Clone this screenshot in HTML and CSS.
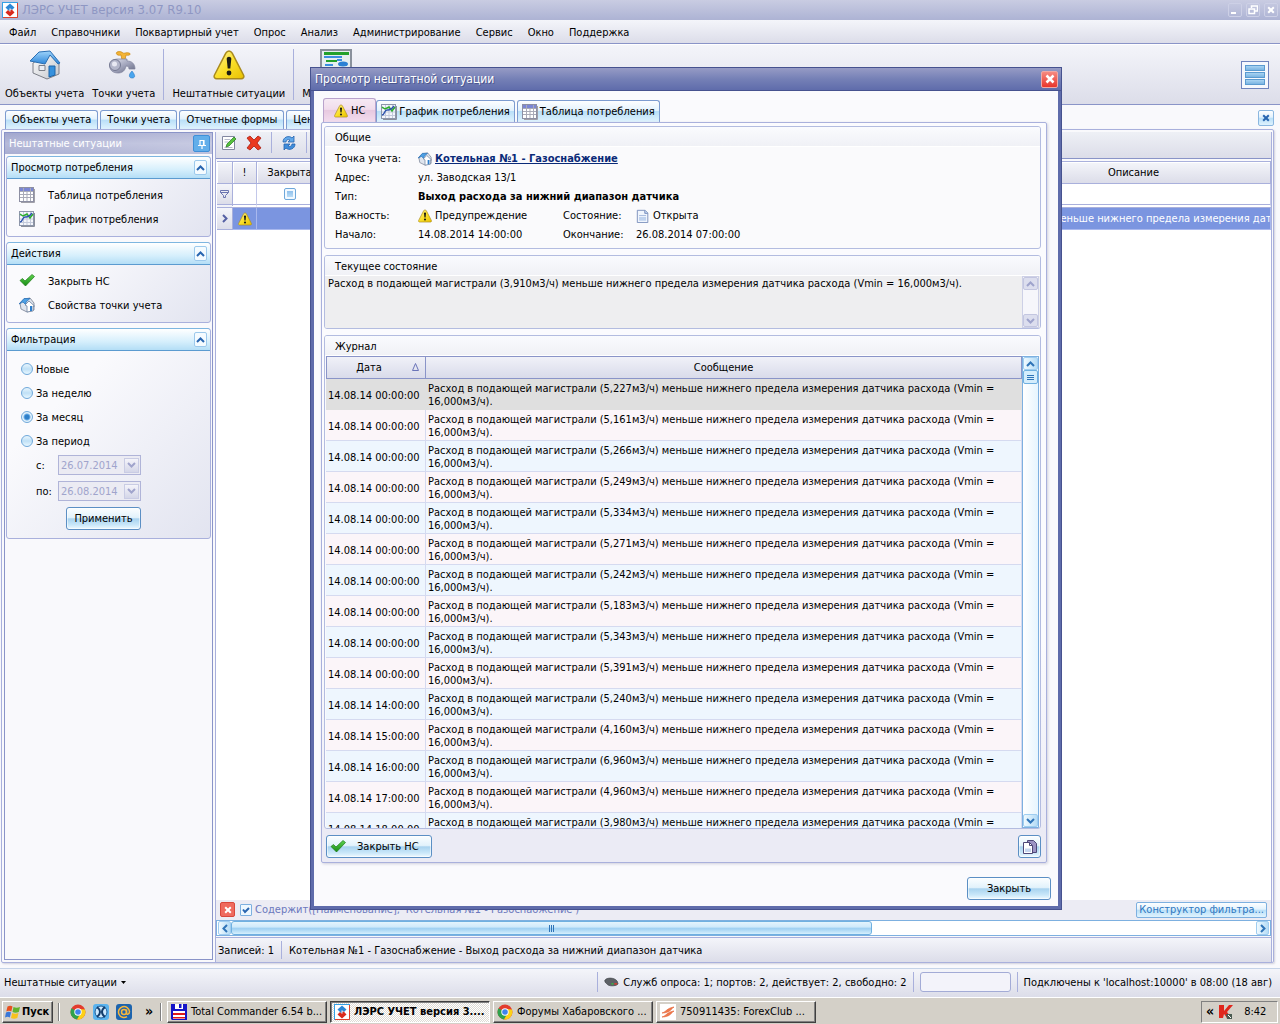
FILE: index.html
```html
<!DOCTYPE html>
<html lang="ru">
<head>
<meta charset="utf-8">
<title>ЛЭРС УЧЕТ версия 3.07 R9.10</title>
<link rel="stylesheet" href="styles.css">
</head>
<body>
<svg class="sprite" width="0" height="0" aria-hidden="true">
  <defs>
    <linearGradient id="g-yellow" x1="0" y1="0" x2="1" y2="1"><stop offset="0" stop-color="#fff3a0"/><stop offset=".5" stop-color="#fbe02a"/><stop offset="1" stop-color="#e8c000"/></linearGradient>
    <linearGradient id="g-roof" x1="0" y1="0" x2="0" y2="1"><stop offset="0" stop-color="#9fd4fb"/><stop offset="1" stop-color="#2d86d9"/></linearGradient>
    <linearGradient id="g-wall" x1="0" y1="0" x2="1" y2="1"><stop offset="0" stop-color="#ffffff"/><stop offset="1" stop-color="#c4c6cc"/></linearGradient>
    <linearGradient id="g-metal" x1="0" y1="0" x2="1" y2="1"><stop offset="0" stop-color="#e6e7f2"/><stop offset=".5" stop-color="#a3a6bd"/><stop offset="1" stop-color="#62667f"/></linearGradient>
    <linearGradient id="g-green" x1="0" y1="0" x2="0" y2="1"><stop offset="0" stop-color="#5fd44f"/><stop offset="1" stop-color="#178a14"/></linearGradient>
  </defs>
  <symbol id="i-logo" viewBox="0 0 16 16"><rect x=".5" y=".5" width="15" height="15" fill="#fff" stroke="#35a0e6"/><path d="M15.500 1v14.500H1" fill="none" stroke="#e0402a"/><path d="m8 1.500 4.500 4L10 8 8 6.200 7 7.200l2 1.300H6.500L3.500 5.500z" fill="#2c87d6"/><path d="m8 14.500-4.500-4L6 8l2 1.800 1-1L7.500 7.800H10l2.500 2.700z" fill="#d9291c"/></symbol>
  <symbol id="i-warn" viewBox="0 0 32 32"><path d="M16 2c1.500 0 2.500 1 3.200 2.200L30.500 26c1 2-.2 3.800-2.300 3.800H3.800c-2.100 0-3.300-1.800-2.300-3.800L12.800 4.200C13.500 3 14.500 2 16 2z" fill="url(#g-yellow)" stroke="#a98a1c" stroke-width="1.500"/><path d="M13.700 10c0-3 4.600-3 4.600 0l-1 9.500h-2.600z" fill="#1c1c14"/><circle cx="16" cy="24" r="2.400" fill="#1c1c14"/></symbol>
  <symbol id="i-house" viewBox="0 0 32 32"><path d="M4 14v10l14 6 12-5V15L20 4z" fill="url(#g-wall)" stroke="#7c7f88"/><path d="m1 12 9-9 11-1 10 12-2 1-8-9-5 9z" fill="url(#g-roof)" stroke="#2a6fb4"/><path d="M20 17h6v9l-6 2z" fill="#3791dd" stroke="#1f64a8"/><path d="M10 16.500h6v5h-6z" fill="#e8edf5" stroke="#7c7f88"/></symbol>
  <symbol id="i-homes" viewBox="0 0 16 16"><path d="M1 6 5 2l6-1 4 5v7l-7 2-6-3z" fill="#dfe5ee" stroke="#8d95a5"/><path d="M0 7 5 1.500h6L7 5v3L4 5z" fill="#4da0e4" stroke="#2a6fb4" stroke-width=".7"/><path d="m6 8 4-4 5.500 5H14v5l-6 1V9z" fill="#fff" stroke="#6b7f9c" stroke-width=".8"/><path d="M11 9h2v5h-2z" fill="#2d7fce"/></symbol>
  <symbol id="i-tap" viewBox="0 0 32 32"><path d="M9 3c3-1 5 0 6 1s3-1 6 0 0 3-3 2l-1 5h-3l-1-5c-3 1-6-1-4-3z" fill="#f4b436" stroke="#c98510" stroke-width=".7"/><path d="M10 10h9v2c5 0 8 3 8 8h-6c0-2-1-3-3-3-1 5-4 7-8 7-6 0-9-4-8-8 1-4 4-6 8-6z" fill="url(#g-metal)" stroke="#7d8099" stroke-width=".7"/><circle cx="7" cy="16" r="5.500" fill="#b4b7cb" stroke="#757992"/><circle cx="6.500" cy="15" r="2.500" fill="#e8e9f3"/><path d="M24 22c4 5 3 7 0 7s-4-3 0-7z" fill="#49a5ee" stroke="#2a78c4" stroke-width=".6"/></symbol>
  <symbol id="i-scheme" viewBox="0 0 32 32"><path d="M1 1h30v30H1z" fill="#e6eef0" stroke="#8a919c" stroke-width="2"/><path d="M4 3h25v3H4z" fill="#23a12c"/><path d="M4 8h9M13 8h9M17 11h5" stroke="#3b8ee0" stroke-width="2"/><path d="M6 12h11" stroke="#23a12c" stroke-width="2"/><path d="M5 16h8" stroke="#3b8ee0" stroke-width="2"/><ellipse cx="23" cy="15" rx="5" ry="2.500" fill="#2b80d4"/></symbol>
  <symbol id="i-table" viewBox="0 0 16 16"><path d="M2 15.500h13.500V2" fill="none" stroke="#a0a0a8"/><rect x=".5" y=".5" width="14" height="14" fill="#fff" stroke="#8d8fa3"/><path d="M1 1h13v3H1z" fill="#7a86d4"/><path d="M1 4.500h13M1 7.500h13M1 10.500h13M4.500 1v13M8 4v10M11.500 1v13" stroke="#a9abb8" fill="none"/></symbol>
  <symbol id="i-chart" viewBox="0 0 16 16"><path d="M2 15.500h13.500V2" fill="none" stroke="#8a8f9c"/><rect x=".5" y=".5" width="14" height="14" fill="#f4f6fb" stroke="#8d96aa"/><path d="M1 4.500h13M1 8h13M1 11.500h13M4.500 1v13M8 1v13M11.500 1v13" stroke="#c3cadb" fill="none"/><path d="m1 3 3 2 4-2 3 4 3-4" stroke="#2bb02b" stroke-width="1.500" fill="none"/><path d="M1 11c3 0 2-5 5-5 2 0 3 1 7-4" stroke="#2f55ad" stroke-width="1.500" fill="none"/></symbol>
  <symbol id="i-check" viewBox="0 0 16 16"><path d="M1 7.500 3.500 5.500 6 8 13 1.500 15.500 3.500 6.500 13z" fill="url(#g-green)" stroke="#1c7a18" stroke-width=".7"/></symbol>
  <symbol id="i-doc" viewBox="0 0 16 16"><path d="M1.500 1.500h9l3 3v11h-12z" fill="#f0f5fd" stroke="#7489b8"/><path d="M10 1.500v3.500h3.500" fill="#bcd0f0" stroke="#7489b8"/><path d="M3.500 9h8v4.500h-8z" fill="#bfd2ee"/><path d="M3.500 7.500h8" stroke="#9db2d8"/></symbol>
  <symbol id="i-edit" viewBox="0 0 16 16"><path d="M1.500 1.500h12v13h-12z" fill="#fff" stroke="#8287a0"/><path d="M3.500 4.500h6M3.500 7h4M3.500 12.500h8" stroke="#b6bacb"/><path d="m5 12 1-3 7-7 2 2-7 7z" fill="#57c13e" stroke="#24791b" stroke-width=".7"/></symbol>
  <symbol id="i-delete" viewBox="0 0 16 16"><path d="m1 3 3-2 4 4 4-4 3 2-4 5 4 5-3 2-4-4-4 4-3-2 4-5z" fill="#ea3a20" stroke="#a81d10" stroke-width=".8"/></symbol>
  <symbol id="i-refresh" viewBox="0 0 16 16"><path d="M2 7c0-5 6-7 9-4l2-2v6H7l2-2C7 4 5 5 5 7z" fill="#62a9ea" stroke="#2362ae" stroke-width=".8"/><path d="M14 9c0 5-6 7-9 4l-2 2V9h6l-2 2c2 1 4 0 4-2z" fill="#3f8ddb" stroke="#2362ae" stroke-width=".8"/></symbol>
  <symbol id="i-copy" viewBox="0 0 16 16"><path d="M5.500 1.500h6l3 3v9h-9z" fill="#9d94c4" stroke="#4e4878"/><path d="M1.500 3.500h6l3 3v8h-9z" fill="#fff" stroke="#4e4878"/><path d="M7.500 3.500v3h3" fill="none" stroke="#4e4878"/><path d="M3 9.500h6v3.500H3z" fill="#c6d6ef"/></symbol>
  <symbol id="i-up" viewBox="0 0 9 6"><path d="M1 5 4.500 1.500 8 5" fill="none" stroke="currentColor" stroke-width="2"/></symbol>
  <symbol id="i-down" viewBox="0 0 9 6"><path d="M1 1 4.500 4.500 8 1" fill="none" stroke="currentColor" stroke-width="2"/></symbol>
  <symbol id="i-left" viewBox="0 0 6 9"><path d="M5 1 1.500 4.500 5 8" fill="none" stroke="currentColor" stroke-width="2"/></symbol>
  <symbol id="i-right" viewBox="0 0 6 9"><path d="M1 1 4.500 4.500 1 8" fill="none" stroke="currentColor" stroke-width="2"/></symbol>
  <symbol id="i-x" viewBox="0 0 10 10"><path d="m1.500 1.500 7 7m0-7-7 7" fill="none" stroke="currentColor" stroke-width="2.500"/></symbol>
  <symbol id="i-pin" viewBox="0 0 10 10"><path d="M3 6V1.500h4V6M1 6.500h8M5 7v3M6.500 1v5" fill="none" stroke="#fff" stroke-width="1.200"/></symbol>
  <symbol id="i-chrome" viewBox="0 0 16 16"><circle cx="8" cy="8" r="7.500" fill="#e33b2e"/><path d="M1.500 4.200A7.500 7.500 0 0 0 7 15.400L10.500 10 8 8z" fill="#2fa24c"/><path d="M15 5.500A7.500 7.500 0 0 1 7 15.400L10.800 9 8 5z" fill="#fcd116"/><circle cx="8" cy="8" r="3.700" fill="#fff"/><circle cx="8" cy="8" r="2.800" fill="#3f83ec"/></symbol>
  <symbol id="i-xapp" viewBox="0 0 16 16"><rect width="16" height="16" rx="3" fill="#5ab3ee"/><circle cx="8" cy="8" r="6" fill="#cdeaff" stroke="#1b5c97"/><path d="M4 3c4 3 4 7 0 10M12 3c-4 3-4 7 0 10" fill="none" stroke="#123c6b" stroke-width="2"/></symbol>
  <symbol id="i-mail" viewBox="0 0 16 16"><rect width="16" height="16" rx="3" fill="#1d64ae"/><circle cx="8" cy="8" r="2.500" fill="none" stroke="#f8b73c" stroke-width="1.500"/><path d="M10.500 5.500V9c0 2 3 1.500 3-1.500A5.500 5.500 0 1 0 11 12.700" fill="none" stroke="#f8b73c" stroke-width="1.500"/></symbol>
  <symbol id="i-floppy" viewBox="0 0 16 16"><path d="M0 0h16v16H1l-1-1z" fill="#1414c8"/><path d="M4 0h8v5H4z" fill="#fff"/><path d="M8 0h2.500v4H8z" fill="#1414c8"/><path d="M2 7h12v8H2z" fill="#fff"/><path d="M2 9h12v2H2zM2 13h12v1.500H2z" fill="#e01818"/></symbol>
  <symbol id="i-forex" viewBox="0 0 16 16"><path d="M0 0h16v16H0z" fill="#fff"/><path d="M2 9c4-1 5-5 12-6-3 2-4 6-12 6zM2 13c4-1 5-5 12-6-3 2-4 6-12 6z" fill="#ef7a4d" stroke="#e25a2b" stroke-width=".6"/></symbol>
  <symbol id="i-windows" viewBox="0 0 16 16"><path d="M2.500 2.500c2-1 3.500-1 5 0L6.300 7.500c-1.500-1-3-1-5 0z" fill="#e8501f"/><path d="M8.500 3c2 1 4 1 6.500 0l-1.200 5c-2 1-4.500 1-6.300 0z" fill="#62b32a"/><path d="M1 8.500c2-1 3.800-1 5 0L4.800 13.500c-1.300-1-3-1-4.800 0z" fill="#3a78d8"/><path d="M7.200 9c2 1 4 1 6.300 0l-1.200 5c-2 1-4.500 1-6.300 0z" fill="#f7c21c"/></symbol>
  <symbol id="i-kasper" viewBox="0 0 16 16"><path d="M1 1h5v6l5-6h4L9 8l3 4-3 2-3-4-1 4H1z" fill="#e0261c"/><path d="M8 10h6v5H9z" fill="#4a5a50"/><path d="m10 11 3 3" stroke="#fff"/></symbol>
  <symbol id="i-service" viewBox="0 0 16 10"><path d="M1 3c2-3 10-3 13 1l1 3c-1 2-8 3-11 1L1 5z" fill="#5d6166" stroke="#3d4044" stroke-width=".7"/><path d="M8 7h2" stroke="#35c43b" stroke-width="1.500"/><path d="M11 7h3" stroke="#e03c2a" stroke-width="1.500"/></symbol>
</svg>

<header class="titlebar">
  <svg class="ic16"><use href="#i-logo"/></svg>
  <h1 class="titlebar-text">ЛЭРС УЧЕТ версия 3.07 R9.10</h1>
  <button class="winbtn" aria-label="Свернуть"><svg width="10" height="10"><path d="M1 8h5" stroke="#fff" stroke-width="2"/></svg></button>
  <button class="winbtn" aria-label="Восстановить"><svg width="10" height="10"><path d="M3.500 3V1h6v5H7M1 4h5.500v4.500H1z" fill="none" stroke="#fff" stroke-width="1.500"/></svg></button>
  <button class="winbtn" aria-label="Закрыть окно"><svg class="x8"><use href="#i-x"/></svg></button>
</header>

<nav class="menubar">
  <a href="#">Файл</a><a href="#">Справочники</a><a href="#">Поквартирный учет</a><a href="#">Опрос</a><a href="#">Анализ</a><a href="#">Администрирование</a><a href="#">Сервис</a><a href="#">Окно</a><a href="#">Поддержка</a>
</nav>

<div class="toolbar">
  <button class="tool"><svg class="ic32"><use href="#i-house"/></svg>Объекты учета</button>
  <button class="tool"><svg class="ic32"><use href="#i-tap"/></svg>Точки учета</button>
  <span class="sep"></span>
  <button class="tool"><svg class="ic32"><use href="#i-warn"/></svg>Нештатные ситуации</button>
  <span class="sep"></span>
  <button class="tool"><svg class="ic32"><use href="#i-scheme"/></svg>Мнемосхемы</button>
  <button class="listbtn" aria-label="Вид"><i></i><i></i><i></i></button>
</div>

<div class="doctabs" role="tablist">
  <button class="doctab" role="tab">Объекты учета</button>
  <button class="doctab" role="tab">Точки учета</button>
  <button class="doctab" role="tab">Отчетные формы</button>
  <button class="doctab" role="tab">Центр</button>
  <button class="closetab" aria-label="Закрыть вкладку"><svg class="x8"><use href="#i-x"/></svg></button>
</div>

<main class="workspace">
  <aside class="sidebar">
    <div class="side-title"><span>Нештатные ситуации</span><button class="pin" aria-label="Закрепить"><svg class="ic10"><use href="#i-pin"/></svg></button></div>
    <section class="group">
      <h2 class="group-head">Просмотр потребления<button class="fold" aria-label="Свернуть группу"><svg class="chev"><use href="#i-up"/></svg></button></h2>
      <div class="group-links">
        <a href="#"><svg class="ic16"><use href="#i-table"/></svg>Таблица потребления</a>
        <a href="#"><svg class="ic16"><use href="#i-chart"/></svg>График потребления</a>
      </div>
    </section>
    <section class="group">
      <h2 class="group-head">Действия<button class="fold" aria-label="Свернуть группу"><svg class="chev"><use href="#i-up"/></svg></button></h2>
      <div class="group-links">
        <a href="#"><svg class="ic16"><use href="#i-check"/></svg>Закрыть НС</a>
        <a href="#"><svg class="ic16"><use href="#i-homes"/></svg>Свойства точки учета</a>
      </div>
    </section>
    <section class="group">
      <h2 class="group-head">Фильтрация<button class="fold" aria-label="Свернуть группу"><svg class="chev"><use href="#i-up"/></svg></button></h2>
      <form class="filter">
        <label class="radio"><input type="radio" name="period">Новые</label>
        <label class="radio"><input type="radio" name="period">За неделю</label>
        <label class="radio"><input type="radio" name="period" checked>За месяц</label>
        <label class="radio"><input type="radio" name="period">За период</label>
        <div class="daterow"><label for="from">с:</label><span class="combo"><select id="from" disabled><option>26.07.2014</option></select><span class="combo-btn"><svg class="chev"><use href="#i-down"/></svg></span></span></div>
        <div class="daterow"><label for="to">по:</label><span class="combo"><select id="to" disabled><option>26.08.2014</option></select><span class="combo-btn"><svg class="chev"><use href="#i-down"/></svg></span></span></div>
        <button type="button" class="btn apply">Применить</button>
      </form>
    </section>
  </aside>

  <section class="content">
    <div class="content-tools">
      <button class="flat" aria-label="Изменить"><svg class="ic16"><use href="#i-edit"/></svg></button>
      <button class="flat" aria-label="Удалить"><svg class="ic16"><use href="#i-delete"/></svg></button>
      <span class="sep"></span>
      <button class="flat" aria-label="Обновить"><svg class="ic16"><use href="#i-refresh"/></svg></button>
      <span class="sep"></span>
    </div>
    <div class="grid-wrap">
      <table class="grid">
        <colgroup><col class="c-ind"><col class="c-mark"><col class="c-closed"><col><col class="c-desc"></colgroup>
        <thead><tr><th></th><th>!</th><th>Закрыта</th><th></th><th>Описание</th></tr></thead>
        <tbody>
          <tr class="filter-row"><td class="ind"><svg width="9" height="10"><path d="M.500 1.500h8v2l-3 3v2h-2v-2l-3-3zM.500 3.500h8" fill="none" stroke="#6a74b0"/></svg></td><td></td><td><input type="checkbox" class="tri" aria-label="Закрыта"></td><td></td><td></td></tr>
          <tr class="sel-row"><td class="ind"><svg class="chev-r"><use href="#i-right"/></svg></td><td><svg class="ic14"><use href="#i-warn"/></svg></td><td></td><td></td><td class="desc">меньше нижнего предела измерения датчика</td></tr>
        </tbody>
      </table>
    </div>
    <div class="filter-panel">
      <button class="redx" aria-label="Очистить фильтр"><svg class="x8"><use href="#i-x"/></svg></button>
      <label class="filter-text"><input type="checkbox" class="chk" checked>Содержит([Наименование], 'Котельная №1 - Газоснабжение')</label>
      <button class="builder">Конструктор фильтра...</button>
    </div>
    <div class="hscroll">
      <span class="sbtn"><svg class="chev-r"><use href="#i-left"/></svg></span><span class="hthumb"><i></i><i></i><i></i></span><span class="hrest"></span><span class="sbtn"><svg class="chev-r"><use href="#i-right"/></svg></span>
    </div>
    <div class="content-foot"><span>Записей: 1</span><span class="sep"></span><span>Котельная №1 - Газоснабжение - Выход расхода за нижний диапазон датчика</span></div>
  </section>
</main>

<footer class="status">
  <a href="#" class="status-view">Нештатные ситуации <svg width="5" height="3"><path d="M0 0h5L2.500 3z" fill="#000"/></svg></a>
  <span class="sep"></span>
  <span class="status-srv"><svg class="srv"><use href="#i-service"/></svg>Служб опроса: 1; портов: 2, действует: 2, свободно: 2</span>
  <span class="sep"></span>
  <span class="progress"></span>
  <span class="sep"></span>
  <span class="status-conn">Подключены к 'localhost:10000' в 08:00 (18 авг)</span>
</footer>

<div class="taskbar">
  <button class="start"><svg class="ic16"><use href="#i-windows"/></svg>Пуск</button>
  <span class="tsep"></span>
  <div class="quick">
    <button class="flat" aria-label="Chrome"><svg class="ic16"><use href="#i-chrome"/></svg></button>
    <button class="flat" aria-label="XApp"><svg class="ic16"><use href="#i-xapp"/></svg></button>
    <button class="flat" aria-label="Почта"><svg class="ic16"><use href="#i-mail"/></svg></button>
    <span class="more">»</span>
  </div>
  <span class="tsep"></span>
  <div class="tasks">
    <button class="task"><svg class="ic16"><use href="#i-floppy"/></svg>Total Commander 6.54 b...</button>
    <button class="task task-on"><svg class="ic16"><use href="#i-logo"/></svg>ЛЭРС УЧЕТ версия 3....</button>
    <button class="task"><svg class="ic16"><use href="#i-chrome"/></svg>Форумы Хабаровского ...</button>
    <button class="task"><svg class="ic16"><use href="#i-forex"/></svg>750911435: ForexClub ...</button>
  </div>
  <div class="tray"><span class="more">«</span><svg class="ic16"><use href="#i-kasper"/></svg><time>8:42</time></div>
</div>

<div class="dialog" role="dialog" aria-labelledby="dlg-title">
  <div class="dlg-title"><h2 id="dlg-title">Просмотр нештатной ситуации</h2><button class="dlg-x" aria-label="Закрыть диалог"><svg class="ic10"><use href="#i-x"/></svg></button></div>
  <div class="dlg-body">
    <div class="dlg-tabs" role="tablist">
      <button class="dlg-tab dlg-tab-on" role="tab"><svg class="ic14"><use href="#i-warn"/></svg>НС</button>
      <button class="dlg-tab" role="tab"><svg class="ic16"><use href="#i-chart"/></svg>График потребления</button>
      <button class="dlg-tab" role="tab"><svg class="ic16"><use href="#i-table"/></svg>Таблица потребления</button>
    </div>
    <div class="panel">
      <section class="box">
        <h3 class="box-head">Общие</h3>
        <dl class="facts">
          <dt>Точка учета:</dt><dd class="wide"><svg class="ic14"><use href="#i-homes"/></svg><a href="#" class="point">Котельная №1 - Газоснабжение</a></dd>
          <dt>Адрес:</dt><dd class="wide">ул. Заводская 13/1</dd>
          <dt>Тип:</dt><dd class="wide"><strong>Выход расхода за нижний диапазон датчика</strong></dd>
          <dt>Важность:</dt><dd><svg class="ic14"><use href="#i-warn"/></svg>Предупреждение</dd><dt>Состояние:</dt><dd><svg class="ic14"><use href="#i-doc"/></svg>Открыта</dd>
          <dt>Начало:</dt><dd>14.08.2014 14:00:00</dd><dt>Окончание:</dt><dd>26.08.2014 07:00:00</dd>
        </dl>
      </section>
      <section class="box">
        <h3 class="box-head" id="state">Текущее состояние</h3>
        <div class="state">
          <textarea readonly aria-labelledby="state">Расход в подающей магистрали (3,910м3/ч) меньше нижнего предела измерения датчика расхода (Vmin = 16,000м3/ч).</textarea>
          <div class="vscroll vscroll-off"><span class="sbtn"><svg class="chev"><use href="#i-up"/></svg></span><span class="vrest"></span><span class="sbtn"><svg class="chev"><use href="#i-down"/></svg></span></div>
        </div>
      </section>
      <section class="box journal">
        <h3 class="box-head">Журнал</h3>
        <div class="log-wrap">
          <div class="log-clip">
          <table class="log">
            <colgroup><col class="c-date"><col></colgroup>
            <thead><tr><th>Дата<svg class="sort" width="7" height="8"><path d="M.5 7.500 3.500.500l3 7z" fill="none" stroke="#6a74b8"/></svg></th><th>Сообщение</th></tr></thead>
            <tbody>
              <tr class="cur"><td>14.08.14 00:00:00</td><td>Расход в подающей магистрали (5,227м3/ч) меньше нижнего предела измерения датчика расхода (Vmin = 16,000м3/ч).</td></tr>
              <tr><td>14.08.14 00:00:00</td><td>Расход в подающей магистрали (5,161м3/ч) меньше нижнего предела измерения датчика расхода (Vmin = 16,000м3/ч).</td></tr>
              <tr><td>14.08.14 00:00:00</td><td>Расход в подающей магистрали (5,266м3/ч) меньше нижнего предела измерения датчика расхода (Vmin = 16,000м3/ч).</td></tr>
              <tr><td>14.08.14 00:00:00</td><td>Расход в подающей магистрали (5,249м3/ч) меньше нижнего предела измерения датчика расхода (Vmin = 16,000м3/ч).</td></tr>
              <tr><td>14.08.14 00:00:00</td><td>Расход в подающей магистрали (5,334м3/ч) меньше нижнего предела измерения датчика расхода (Vmin = 16,000м3/ч).</td></tr>
              <tr><td>14.08.14 00:00:00</td><td>Расход в подающей магистрали (5,271м3/ч) меньше нижнего предела измерения датчика расхода (Vmin = 16,000м3/ч).</td></tr>
              <tr><td>14.08.14 00:00:00</td><td>Расход в подающей магистрали (5,242м3/ч) меньше нижнего предела измерения датчика расхода (Vmin = 16,000м3/ч).</td></tr>
              <tr><td>14.08.14 00:00:00</td><td>Расход в подающей магистрали (5,183м3/ч) меньше нижнего предела измерения датчика расхода (Vmin = 16,000м3/ч).</td></tr>
              <tr><td>14.08.14 00:00:00</td><td>Расход в подающей магистрали (5,343м3/ч) меньше нижнего предела измерения датчика расхода (Vmin = 16,000м3/ч).</td></tr>
              <tr><td>14.08.14 00:00:00</td><td>Расход в подающей магистрали (5,391м3/ч) меньше нижнего предела измерения датчика расхода (Vmin = 16,000м3/ч).</td></tr>
              <tr><td>14.08.14 14:00:00</td><td>Расход в подающей магистрали (5,240м3/ч) меньше нижнего предела измерения датчика расхода (Vmin = 16,000м3/ч).</td></tr>
              <tr><td>14.08.14 15:00:00</td><td>Расход в подающей магистрали (4,160м3/ч) меньше нижнего предела измерения датчика расхода (Vmin = 16,000м3/ч).</td></tr>
              <tr><td>14.08.14 16:00:00</td><td>Расход в подающей магистрали (6,960м3/ч) меньше нижнего предела измерения датчика расхода (Vmin = 16,000м3/ч).</td></tr>
              <tr><td>14.08.14 17:00:00</td><td>Расход в подающей магистрали (4,960м3/ч) меньше нижнего предела измерения датчика расхода (Vmin = 16,000м3/ч).</td></tr>
              <tr><td>14.08.14 18:00:00</td><td>Расход в подающей магистрали (3,980м3/ч) меньше нижнего предела измерения датчика расхода (Vmin = 16,000м3/ч).</td></tr>
            </tbody>
          </table>
          </div>
          <div class="vscroll"><span class="sbtn"><svg class="chev"><use href="#i-up"/></svg></span><span class="vthumb"><i></i><i></i><i></i></span><span class="vrest"></span><span class="sbtn"><svg class="chev"><use href="#i-down"/></svg></span></div>
        </div>
      </section>
      <div class="panel-foot">
        <button class="btn btn-check"><svg class="ic16"><use href="#i-check"/></svg>Закрыть НС</button>
        <button class="btn btn-icon" aria-label="Копировать"><svg class="ic16"><use href="#i-copy"/></svg></button>
      </div>
    </div>
    <div class="dlg-foot"><button class="btn btn-close">Закрыть</button></div>
  </div>
</div>
</body>
</html>
```
FILE: styles.css
```css
:root {
  --line: #a9b0dc;
  --line-dark: #8a94c8;
  --blue: #5b9bd0;
  --chrome: linear-gradient(#f4f5fa, #dcdde9);
  --tab: linear-gradient(#fdfeff 0%, #e3f2fd 45%, #b9dff8 50%, #dff3fe 100%);
}
* { box-sizing: border-box; }
html, body { height: 100%; }
body {
  margin: 0;
  display: flex;
  flex-direction: column;
  position: relative;
  overflow: hidden;
  background: #f9f9fc;
  color: #000;
  font: 11px/13px "DejaVu Sans Condensed", Tahoma, "Liberation Sans", sans-serif;
}
button, select, textarea, input { font: inherit; color: inherit; margin: 0; padding: 0; }
button { background: none; border: 0; }
a { color: inherit; text-decoration: none; }
h1, h2, h3, dl, dd { margin: 0; font: inherit; }
svg { flex: none; display: block; }
.sprite { position: absolute; }
.ic10 { width: 10px; height: 10px; }
.ic14 { width: 14px; height: 14px; }
.ic16 { width: 16px; height: 16px; }
.ic32 { width: 32px; height: 32px; }
.x8 { width: 8px; height: 8px; }
.chev { width: 9px; height: 6px; }
.chev-r { width: 6px; height: 9px; }
.flat { display: flex; }
.sep { width: 1px; background: var(--line); align-self: stretch; flex: none; }

.titlebar {
  height: 20px;
  flex: none;
  display: flex;
  align-items: center;
  gap: 4px;
  padding: 0 2px;
  background: linear-gradient(#c9cce2, #adb3d4);
}
.titlebar-text { flex: 1; font-size: 13px; line-height: 16px; color: #8f97c3; }
.winbtn { width: 14px; height: 14px; display: grid; place-items: center; border: 1px solid #cdd0e6; border-radius: 2px; color: #fff; }

.menubar {
  height: 24px;
  flex: none;
  display: flex;
  align-items: center;
  gap: 15px;
  padding: 1px 9px 0;
  background: var(--chrome);
  border-bottom: 1px solid var(--line-dark);
}
.toolbar {
  height: 61px;
  flex: none;
  display: flex;
  align-items: stretch;
  gap: 8px;
  padding: 4px 11px 4px 5px;
  background: var(--chrome);
  border-top: 1px solid #fff;
  border-bottom: 1px solid var(--line-dark);
}
.tool { display: flex; flex-direction: column; align-items: center; justify-content: space-between; white-space: nowrap; }
.listbtn { margin: auto 0 auto auto; width: 28px; height: 28px; border: 1px solid #6f83bd; background: #f6f8fd; padding: 3px; display: flex; flex-direction: column; gap: 1px; }
.listbtn i { flex: 1; border: 1px solid #5b9bd0; background: linear-gradient(#a8d3f2, #7ab4e2); }

.doctabs { height: 24px; flex: none; display: flex; align-items: flex-end; gap: 2px; padding: 0 6px 0 5px; }
.doctab { height: 19px; padding: 0 6px 1px; border: 1px solid #7d9cd0; border-bottom: 0; border-radius: 3px 3px 0 0; background: var(--tab); white-space: nowrap; }
.closetab { width: 16px; height: 16px; margin: 0 0 3px auto; border: 1px solid #8bb7e0; border-radius: 2px; background: var(--tab); color: #2865b0; display: grid; place-items: center; }

.workspace {
  flex: 1;
  min-height: 0;
  display: flex;
  gap: 2px;
  margin: 0 6px 5px 1px;
  padding: 2px 1px 0 2px;
  border: 1px solid var(--line);
  border-radius: 2px;
  box-shadow: 1px 1px 2px #d0d0dc;
}
.sidebar { width: 209px; flex: none; margin-bottom: 2px; border: 1px solid var(--line-dark); display: flex; flex-direction: column; padding-bottom: 2px; }
.side-title { height: 21px; display: flex; align-items: center; justify-content: space-between; padding: 0 2px 0 4px; background: linear-gradient(90deg, rgba(255,255,255,0), rgba(255,255,255,.25)), linear-gradient(#a2a7ce, #b6bad9 50%, #a9aed2); color: #fff; }
.pin { width: 17px; height: 17px; border: 1px solid #3f8fd8; border-radius: 2px; background: #62aeea; display: grid; place-items: center; }
.group { margin: 2px 1px 3px; border: 1px solid var(--line); border-radius: 3px; background: linear-gradient(135deg, #fafafd 30%, #e2e4f0); }
.group-head { height: 22px; display: flex; align-items: center; justify-content: space-between; padding: 0 3px 0 4px; background: linear-gradient(#fff, #d6effc 60%, #b4def6); border-bottom: 1px solid var(--blue); box-shadow: 0 -1px 0 #7db6e0; border-radius: 3px 3px 0 0; }
.fold { width: 13px; height: 15px; border: 1px solid #9cc9ec; border-radius: 2px; background: #f4fbff; color: #2865b0; display: grid; place-items: center; }
.group-links { padding: 4px 12px 5px; }
.group-links a { height: 24px; display: flex; align-items: center; gap: 13px; }
.filter { padding: 6px 14px 8px; }
.radio { height: 24px; display: flex; align-items: center; gap: 3px; }
.radio input { appearance: none; width: 12px; height: 12px; border: 1px solid #6fa8da; border-radius: 50%; background: linear-gradient(#e8f5fd, #bfe0f6 50%, #e8f7ff); }
.radio input:checked { background: radial-gradient(#2e7fc9 0 2px, #6fb0e8 3px, #e3f2fc 4px); }
.daterow { height: 20px; margin: 2px 0 6px; padding-left: 15px; display: flex; align-items: center; }
.daterow label { width: 22px; }
.combo { width: 83px; height: 20px; display: flex; align-items: center; border: 1px solid #b0b4d8; background: #ebebf3; color: #a0a4cc; padding: 0 1px 0 2px; }
.combo select { flex: 1; min-width: 0; appearance: none; border: 0; background: none; opacity: 1; color: #a0a4cc; }
.combo-btn { width: 15px; height: 15px; border: 1px solid #c9cce4; background: linear-gradient(#f4f4fa, #d4d6e8); display: grid; place-items: center; }
.btn {
  height: 23px;
  border: 1px solid #5b8fc4;
  border-radius: 3px;
  background: linear-gradient(#fbfeff 0%, #e2f2fb 45%, #a9d3ef 52%, #c9e7f9 80%, #eefaff 100%);
  box-shadow: inset 0 0 0 1px rgba(255,255,255,.55);
  text-align: center;
}
.apply { display: block; width: 75px; margin: 0 0 0 45px; }

.content { flex: 1; min-width: 0; display: flex; flex-direction: column; border: 0 solid var(--line); border-width: 0 1px; }
.content-tools { height: 27px; flex: none; display: flex; align-items: center; gap: 9px; padding: 0 5px 5px; background: linear-gradient(#eef0f6, #dcdde9); border-bottom: 1px solid var(--line-dark); }
.grid-wrap { flex: 1; min-height: 0; margin-top: 2px; background: #fff; overflow: hidden; padding-left: 1px; }
.grid { width: 100%; table-layout: fixed; border-collapse: separate; border-spacing: 0; }
.c-ind { width: 16px; }
.c-mark { width: 24px; }
.c-closed { width: 66px; }
.c-desc { width: 274px; }
.grid th { height: 23px; padding: 0; font-weight: normal; background: var(--chrome); border: solid var(--line); border-width: 1px 1px 1px 0; box-shadow: inset 1px 1px 0 #fff; }
.grid td { padding: 0; height: 22px; border-right: 1px solid #c3c8ea; border-bottom: 1px solid #c3c8ea; }
.grid td svg, .grid td input { display: block; margin: 0 auto; }
.grid .ind { background: var(--chrome); border-color: var(--line); color: #5560a4; }
.filter-row td { border-bottom: 4px double var(--line); height: 24px; }
.sel-row td { background: #7b95e0; border-color: #a9b8ee; }
.grid .desc { color: #fff; white-space: nowrap; overflow: hidden; padding-left: 56px; }
.tri { appearance: none; width: 12px; height: 12px; border: 1px solid #6fa8da; border-radius: 2px; background: linear-gradient(#8fc0ec, #b9dcf6) content-box, #f2f9ff; }
.grid .tri { padding: 2px; }

.filter-panel { height: 20px; flex: none; display: flex; align-items: center; gap: 5px; padding: 0 4px 1px; background: #ececf4; color: #6b78bd; }
.redx { width: 15px; height: 15px; border: 1px solid #d8473c; border-radius: 2px; background: #ef6a5e; color: #fff; display: grid; place-items: center; }
.filter-text { display: flex; align-items: center; gap: 3px; flex: 1; }
.chk { appearance: none; width: 12px; height: 12px; border: 1px solid #7db0e0; border-radius: 1px; background: #eef8ff; }
.chk:checked { background: #eef8ff url("data:image/svg+xml,%3Csvg xmlns='http://www.w3.org/2000/svg' viewBox='0 0 10 10'%3E%3Cpath d='M2 4.500 4 7 8 3' fill='none' stroke='%232865b0' stroke-width='2'/%3E%3C/svg%3E"); }
.builder { height: 16px; padding: 0 2px; border: 1px solid #7db0e0; border-radius: 2px; background: var(--tab); color: #2f78c0; line-height: 13px; }
.hscroll { height: 16px; flex: none; display: flex; border: 1px solid #7db0e0; background: #fff; padding: 0 1px; }
.sbtn { display: grid; place-items: center; background: linear-gradient(90deg, #f0faff, #b5dcf6); color: #2f74b8; border: 1px solid #9fcdf0; border-radius: 2px; flex: none; }
.hscroll .sbtn { width: 13px; }
.hthumb { flex: 642; display: flex; align-items: center; justify-content: center; gap: 1px; border: 1px solid #6fb0e0; border-radius: 3px; background: linear-gradient(#e4f4fd, #cfeafb 40%, #9fd0f2 55%, #d6f0fd); }
.hthumb i { width: 1px; height: 7px; background: #2f74b8; }
.hrest { flex: 386; }
.content-foot { height: 25px; flex: none; display: flex; align-items: center; gap: 7px; padding: 3px 4px 3px 2px; margin-top: 1px; background: var(--chrome); border-top: 1px solid var(--line); }

.status { height: 29px; flex: none; display: flex; align-items: center; gap: 6px; padding: 3px 8px 5px 4px; background: var(--chrome); border-top: 1px solid #c5d3e8; }
.status-view { flex: 1; display: flex; align-items: center; gap: 4px; }
.status-srv { display: flex; align-items: center; gap: 4px; }
.srv { width: 15px; height: 10px; }
.progress { width: 91px; height: 20px; border: 1px solid #a3abd6; border-radius: 3px; background: #f3f3fa; }

.taskbar { height: 27px; flex: none; display: flex; align-items: center; gap: 5px; padding: 1px 2px 0; background: #d4d0c8; border-top: 1px solid #fff; }
.start, .task { height: 22px; display: flex; align-items: center; border: 1px solid; border-color: #fff #404040 #404040 #fff; box-shadow: inset -1px -1px 0 #808080; background: #d4d0c8; }
.start { width: 51px; gap: 1px; padding: 0 2px; font-weight: bold; }
.tsep { width: 2px; height: 18px; border-left: 1px solid #808080; border-right: 1px solid #fff; }
.quick { display: flex; align-items: center; gap: 7px; padding: 0 0 0 5px; width: 90px; }
.more { font-size: 14px; font-weight: bold; padding-left: 6px; }
.tasks { flex: 1; display: flex; gap: 3px; min-width: 0; }
.task { width: 160px; gap: 4px; padding: 0 3px; white-space: nowrap; overflow: hidden; }
.task-on { font-weight: bold; background: repeating-conic-gradient(#fff 0 25%, #dedbd4 0 50%) 0 0 / 2px 2px; border-color: #404040 #fff #fff #404040; box-shadow: inset 1px 1px 0 #808080; }
.tray { width: 77px; height: 22px; display: flex; align-items: center; gap: 4px; border: 1px solid; border-color: #808080 #fff #fff #808080; }
.tray .more { padding-left: 4px; }
.tray time { padding-left: 6px; }

.dialog {
  position: absolute;
  inset: 67px 218px 114px 310px;
  display: flex;
  flex-direction: column;
  border: 1px solid #46528f;
  background: #5f6cab;
  padding: 0 3px 3px;
}
.dlg-title { height: 23px; flex: none; margin: 0 -3px; display: flex; align-items: center; justify-content: space-between; padding: 0 3px 0 4px; background: linear-gradient(#969bc5, #7580b6 50%, #5f6cab); color: #fff; border-bottom: 1px solid #46528f; }
.dlg-title h2 { font-size: 12px; line-height: 16px; text-shadow: 1px 1px 0 #4b568f; }
.dlg-x { width: 17px; height: 17px; border: 1px solid #f0a8a4; border-radius: 2px; background: linear-gradient(#f58a80, #e9352c); display: grid; place-items: center; }
.dlg-body { flex: 1; min-height: 0; background: #fafafd; display: flex; flex-direction: column; padding: 7px 7px 6px; }
.dlg-tabs { height: 24px; flex: none; display: flex; align-items: flex-end; padding-left: 2px; }
.dlg-tab { height: 22px; display: flex; align-items: center; gap: 2px; padding: 0 4px; margin-right: 2px; border: 1px solid #7d9cd0; border-bottom: 0; border-radius: 3px 3px 0 0; background: var(--tab); white-space: nowrap; }
.dlg-tab-on { height: 24px; margin-right: 0; padding: 0 10px; gap: 3px; border-color: #b9a3cc; background: linear-gradient(#f6eaf4, #f1dcec 45%, #e7c9e0 50%, #f3dcee); }
.panel { flex: 1; min-height: 0; margin-right: 4px; display: flex; flex-direction: column; gap: 6px; padding: 3px 5px 4px 2px; border: 1px solid var(--line); border-radius: 2px; background: linear-gradient(#fbfbfe 70%, #ebebf5 96%); box-shadow: 1px 1px 3px #d0d0dc; }
.box { flex: none; border: 1px solid #b3bce0; border-radius: 3px; background: #fafafc; overflow: hidden; }
.box-head { height: 20px; line-height: 13px; padding: 4px 10px 0; background: linear-gradient(#fafbfe, #f0f1f6); border-bottom: 1px solid #fff; }
.facts { display: grid; grid-template-columns: 83px 145px 73px 1fr; grid-auto-rows: 19px; align-items: center; padding: 2px 10px 4px; }
.facts dd { display: flex; align-items: center; gap: 3px; }
.facts .wide { grid-column: 2 / -1; }
.point { font-weight: bold; color: #0a2a78; text-decoration: underline; }
.state { height: 52px; display: flex; background: #eeeef0; padding-right: 1px; }
.state textarea { flex: 1; border: 0; background: none; resize: none; overflow: hidden; padding: 1px 3px; }
.vscroll { width: 17px; flex: none; display: flex; flex-direction: column; border: 1px solid #7db0e0; background: linear-gradient(90deg, #fff, #e6f5fe); }
.vscroll .sbtn { height: 13px; }
.vthumb { height: 14px; display: flex; flex-direction: column; justify-content: center; align-items: center; gap: 1px; border: 1px solid #6fb0e0; border-radius: 2px; background: #d4edfc; }
.vthumb i { width: 7px; height: 1px; background: #2f74b8; }
.vrest { flex: 1; }
.vscroll-off { border-color: #cdd0e6; background: #f6f6fb; }
.vscroll-off .sbtn { background: #dcdeee; border-color: #c3c6e0; color: #9ea3cc; }
.journal { flex: 1; min-height: 0; display: flex; flex-direction: column; }
.journal .box-head { flex: none; }
.log-wrap { flex: 1; min-height: 0; display: flex; padding: 0 1px; }
.log-clip { flex: 1; min-width: 0; overflow: hidden; }
.log { width: 100%; table-layout: fixed; border-collapse: separate; border-spacing: 0; }
.c-date { width: 100px; }
.log th { height: 23px; padding: 0; font-weight: normal; background: linear-gradient(#f0f1f8, #d9dbea); border: solid var(--line-dark); border-width: 1px 1px 1px 0; position: relative; }
.log th:first-child { border-left-width: 1px; padding-right: 14px; }
.sort { position: absolute; right: 6px; top: 6px; }
.log td { height: 31px; padding: 3px 2px 1px; border-right: 1px solid #d5daf0; border-bottom: 1px solid #d5daf0; background: #eef6fe; }
.log tr:nth-child(even) td { background: #fbf5f9; }
.log .cur td { background: #dfdfdf; border-color: #dfdfdf; }
.panel-foot { flex: none; display: flex; justify-content: space-between; padding-left: 2px; }
.btn-check { width: 106px; display: flex; align-items: center; gap: 11px; padding: 0 3px; }
.btn-icon { width: 23px; display: grid; place-items: center; }
.dlg-foot { flex: none; padding-top: 14px; display: flex; justify-content: flex-end; }
.btn-close { width: 84px; }
```
